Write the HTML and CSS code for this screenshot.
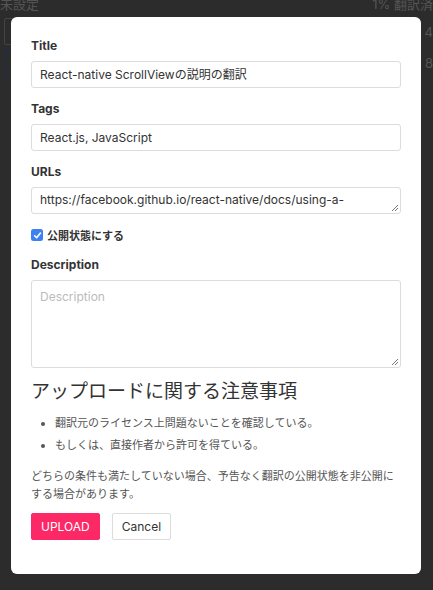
FILE: index.html
```html
<!DOCTYPE html>
<html lang="ja">
<head>
<meta charset="utf-8">
<link rel="stylesheet" href="styles.css">
</head>
<body>
<div class="page">
  <div class="bg-top">
    <span class="bg-text">未設定</span>
    <span class="bg-text">1% 翻訳済</span>
  </div>
  <div class="bg-row"><span class="bg-box"></span><span class="bg-text">翻訳数 &nbsp; 4</span></div>
  <div class="bg-row"><span class="bg-box blue"></span><span class="bg-text">8</span></div>
</div>
<div class="overlay">
  <div class="modal">
    <div class="group">
      <label class="label">Title</label>
      <div class="input">React-native ScrollViewの説明の翻訳</div>
    </div>
    <div class="group">
      <label class="label">Tags</label>
      <div class="input">React.js, JavaScript</div>
    </div>
    <div class="group">
      <label class="label">URLs</label>
      <div class="input textarea short">https://facebook.github.io/react-native/docs/using-a-<br>scrollview.html<span class="grip"><svg width="7" height="7" viewBox="0 0 7 7"><path d="M1 7L7 1M4 7L7 4" stroke="#777" stroke-width="1"/></svg></span></div>
    </div>
    <div class="check-row">
      <span class="checkbox"><svg width="9" height="9" viewBox="0 0 9 9"><path d="M1.6 4.8L3.6 6.8L7.5 2" fill="none" stroke="#fff" stroke-width="1.6" stroke-linecap="round" stroke-linejoin="round"/></svg></span>
      <span class="check-label">公開状態にする</span>
    </div>
    <div class="group">
      <label class="label">Description</label>
      <div class="input textarea tall"><span class="placeholder">Description</span><span class="grip"><svg width="7" height="7" viewBox="0 0 7 7"><path d="M1 7L7 1M4 7L7 4" stroke="#777" stroke-width="1"/></svg></span></div>
    </div>
    <h2 class="heading">アップロードに関する注意事項</h2>
    <ul class="notes">
      <li>翻訳元のライセンス上問題ないことを確認している。</li>
      <li>もしくは、直接作者から許可を得ている。</li>
    </ul>
    <p class="para">どちらの条件も満たしていない場合、予告なく翻訳の公開状態を非公開にする場合があります。</p>
    <div class="buttons">
      <button class="btn primary">UPLOAD</button>
      <button class="btn">Cancel</button>
    </div>
  </div>
</div>
</body>
</html>
```
FILE: styles.css
```css
* { box-sizing: border-box; }
html, body {
  margin: 0;
  padding: 0;
  width: 433px;
  height: 590px;
  overflow: hidden;
  background: #2c2c2c;
  font-family: "Inter", "Noto Sans CJK JP", sans-serif;
}
.page {
  color: #5a5a5a;
}
.bg-top {
  display: flex;
  justify-content: space-between;
  margin-top: -6px;
  font-size: 13px;
  line-height: 20px;
}
.bg-row {
  display: flex;
  justify-content: space-between;
  align-items: center;
  padding-left: 4px;
  height: 27px;
  font-size: 13px;
  margin-top: 4px;
}
.bg-box {
  width: 20px;
  height: 27px;
  border: 1px solid #444;
  border-radius: 2px;
}
.bg-box.blue { border-color: #1f2b4d; }
.bg-text { color: #555; }
.overlay {
  position: fixed;
  inset: 0;
}
.modal {
  position: absolute;
  left: 11px;
  top: 17px;
  width: 410px;
  height: 557px;
  background: #fff;
  border-radius: 6px;
  padding: 20px 20px;
}
.group { margin-bottom: 12px; }
.label {
  display: block;
  font-size: 12px;
  font-weight: 700;
  line-height: 18px;
  color: #333;
  margin-bottom: 6px;
}
.input {
  position: relative;
  height: 27px;
  border: 1px solid #dcdcdc;
  border-radius: 3px;
  padding: 0 8px;
  font-size: 12px;
  line-height: 25px;
  color: #333;
  overflow: hidden;
  white-space: nowrap;
}
.textarea { white-space: normal; line-height: 20px; padding-top: 2px; }
.short { height: 27px; }
.tall { height: 88px; padding-top: 6px; }
.placeholder { color: #bbb; }
.grip {
  position: absolute;
  right: 2px;
  bottom: 2px;
  width: 7px;
  height: 7px;
  line-height: 0;
}
.check-row {
  display: flex;
  align-items: center;
  height: 18px;
  margin-bottom: 12px;
}
.checkbox {
  width: 12px;
  height: 12px;
  border-radius: 2.5px;
  background: #3b82f0;
  display: flex;
  align-items: center;
  justify-content: center;
  margin-right: 4px;
}
.check-label {
  font-size: 11px;
  font-weight: 700;
  color: #333;
}
.heading {
  margin: 2px 0 8px;
  font-size: 19px;
  font-weight: 400;
  line-height: 24px;
  color: #333;
}
.notes {
  margin: 0 0 11px;
  padding-left: 24px;
  font-size: 11px;
  line-height: 22px;
  color: #555;
}
.para {
  margin: 0 0 10px;
  font-size: 11px;
  line-height: 18px;
  color: #555;
}
.buttons { display: flex; gap: 12px; }
.btn {
  height: 27px;
  padding: 0 9px;
  border: 1px solid #dcdcdc;
  border-radius: 2px;
  background: #fff;
  font-family: inherit;
  font-size: 12px;
  color: #333;
}
.btn.primary {
  background: #fd2866;
  border-color: #fd2866;
  color: #fff;
}
```
